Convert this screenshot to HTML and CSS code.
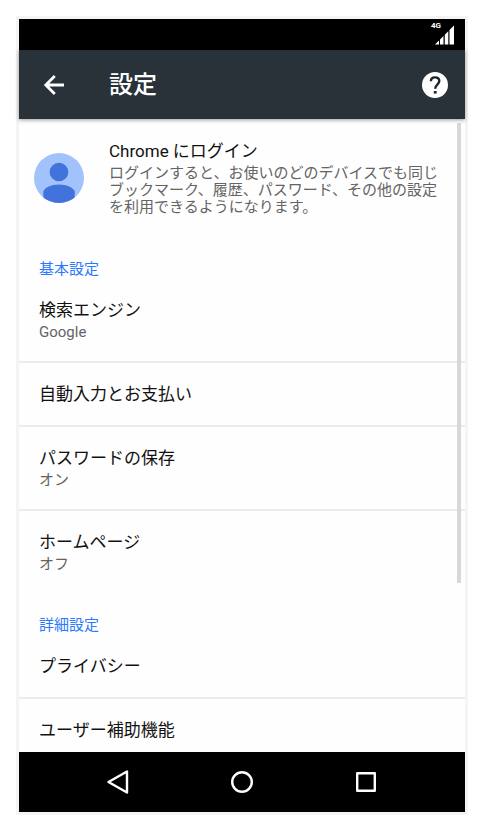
FILE: index.html
```html
<!DOCTYPE html>
<html lang="ja">
<head>
<meta charset="utf-8">
<meta name="viewport" content="width=device-width, initial-scale=1">
<title>設定</title>
<link rel="stylesheet" href="styles.css">
</head>
<body>
<div class="phone">
  <div class="status">
    <div class="signal">
      <span class="network">4G</span>
      <svg width="20" height="20" viewBox="0 0 20 20" aria-hidden="true">
        <path fill="#fff" d="M1 19.500L5 15.500V19.500zM6 14.500L9.500 11V19.500H6zM10.800 9.700L14.300 6.200V19.500H10.800zM15.500 5L20 .5V19.500H15.500z"/>
      </svg>
    </div>
  </div>
  <header class="appbar">
    <button class="icon-button" type="button" aria-label="戻る">
      <svg width="30" height="30" viewBox="0 0 30 30" fill="none" stroke="#fff" stroke-width="2.800"><path d="M25 15H7M15.800 6L6.800 15L15.800 24"/></svg>
    </button>
    <h1 class="heading">設定</h1>
    <button class="icon-button" type="button" aria-label="ヘルプ">
      <svg width="30" height="30" viewBox="0 0 30 30"><circle cx="15" cy="15" r="13" fill="#fff"/><path fill="none" stroke="#1b262c" stroke-width="2.400" d="M10.900 11.200C10.900 8.600 12.600 7.400 15 7.400S19.300 8.700 19.300 11.100C19.300 14.200 15.200 14.600 15.200 18.800"/><rect x="13.800" y="21" width="2.800" height="2.600" fill="#1b262c"/></svg>
    </button>
  </header>
  <main class="content">
    <a class="account" href="#login">
      <svg class="avatar" viewBox="0 0 50 50" aria-hidden="true">
        <defs><clipPath id="disc"><circle cx="25" cy="25" r="25"/></clipPath></defs>
        <g clip-path="url(#disc)">
          <rect width="50" height="50" fill="#a1c2fa"/>
          <circle cx="25" cy="19" r="9.300" fill="#4272db"/>
          <path fill="#4272db" d="M9.300 50V38.500C11 34.500 17 31.500 25 31.500s14 3 15.700 7V50z"/>
        </g>
      </svg>
      <span class="lines">
        <span class="title">Chrome にログイン</span>
        <span class="description">ログインすると、お使いのどのデバイスでも同じブックマーク、履歴、パスワード、その他の設定を利用できるようになります。</span>
      </span>
    </a>
    <section>
      <h2 class="section-title">基本設定</h2>
      <a class="row" href="#search"><span class="title">検索エンジン</span><span class="value">Google</span></a>
      <a class="row" href="#autofill"><span class="title">自動入力とお支払い</span></a>
      <a class="row" href="#passwords"><span class="title">パスワードの保存</span><span class="value">オン</span></a>
      <a class="row" href="#home"><span class="title">ホームページ</span><span class="value">オフ</span></a>
    </section>
    <section>
      <h2 class="section-title">詳細設定</h2>
      <a class="row" href="#privacy"><span class="title">プライバシー</span></a>
      <a class="row" href="#accessibility"><span class="title">ユーザー補助機能</span></a>
    </section>
    <div class="thumb"></div>
  </main>
  <nav class="navbar">
    <button class="nav-button" type="button" aria-label="戻る">
      <svg width="26" height="26" viewBox="0 0 26 26"><path d="M22 2.500V23.500L3.500 13z"/></svg>
    </button>
    <button class="nav-button" type="button" aria-label="ホーム">
      <svg width="26" height="26" viewBox="0 0 26 26"><circle cx="13" cy="13" r="9.800"/></svg>
    </button>
    <button class="nav-button" type="button" aria-label="最近使ったアプリ">
      <svg width="26" height="26" viewBox="0 0 26 26"><rect x="4.200" y="4.200" width="17.600" height="17.600"/></svg>
    </button>
  </nav>
</div>
</body>
</html>
```

FILE: styles.css
```css
* {
  box-sizing: border-box;
}

body {
  display: flex;
  height: 100vh;
  margin: 0;
  padding: 16px;
  background: #fff;
  font-family: Roboto, "Noto Sans CJK JP", sans-serif;
}

.phone {
  display: flex;
  flex: 1;
  flex-direction: column;
  min-width: 0;
  border: 3px solid #f4f4f4;
  background: #fefefe;
}

.status {
  display: flex;
  flex: none;
  justify-content: flex-end;
  height: 31px;
  padding: 6px 11px;
  background: #000;
}

.signal {
  position: relative;
  height: 20px;
}

.network {
  position: absolute;
  top: -4px;
  right: 13px;
  color: #fff;
  font-size: 8px;
  font-weight: 700;
  line-height: 10px;
}

svg {
  display: block;
}

button {
  display: flex;
  align-items: center;
  justify-content: center;
  padding: 0;
  border: 0;
  background: none;
}

.appbar {
  position: relative;
  z-index: 1;
  display: flex;
  flex: none;
  align-items: center;
  height: 69px;
  padding: 0 10px 0 15px;
  background: #283238;
  box-shadow: 0 1px 4px rgba(0, 0, 0, 0.4);
}

.icon-button {
  width: 40px;
  height: 40px;
}

.heading {
  flex: 1;
  margin: 0;
  padding-left: 35px;
  color: #fff;
  font-size: 24px;
  font-weight: 500;
  line-height: 32px;
}

.content {
  position: relative;
  flex: 1;
  min-height: 0;
  overflow: hidden;
}

a {
  color: inherit;
  text-decoration: none;
}

.account {
  display: flex;
  align-items: center;
  gap: 25px;
  padding: 20px 22px 21px 15px;
}

.avatar {
  flex: none;
  width: 50px;
  height: 50px;
}

.lines {
  display: flex;
  flex-direction: column;
  gap: 2px;
}

.title {
  color: #111;
  font-size: 17px;
  line-height: 24px;
}

.description {
  color: #646464;
  font-size: 15px;
  line-height: 17px;
}

.value {
  color: #646464;
  font-size: 15px;
  line-height: 20px;
}

.section-title {
  margin: 0;
  padding: 22px 20px 0;
  color: #2979ff;
  font-size: 15px;
  font-weight: 400;
  line-height: 20px;
}

.row {
  display: flex;
  flex-direction: column;
  padding: 19px 20px;
}

.row + .row {
  border-top: 2px solid #ececec;
}

.thumb {
  position: absolute;
  top: 4px;
  right: 4px;
  width: 4px;
  height: calc(100% - 173px);
  background: #d8d8d8;
}

.navbar {
  display: flex;
  flex: none;
  align-items: center;
  justify-content: center;
  gap: 76px;
  height: 60px;
  background: #000;
}

.nav-button {
  width: 48px;
  height: 48px;
}

.nav-button svg {
  fill: none;
  stroke: #fff;
  stroke-width: 2.4px;
  stroke-linejoin: round;
}
```
